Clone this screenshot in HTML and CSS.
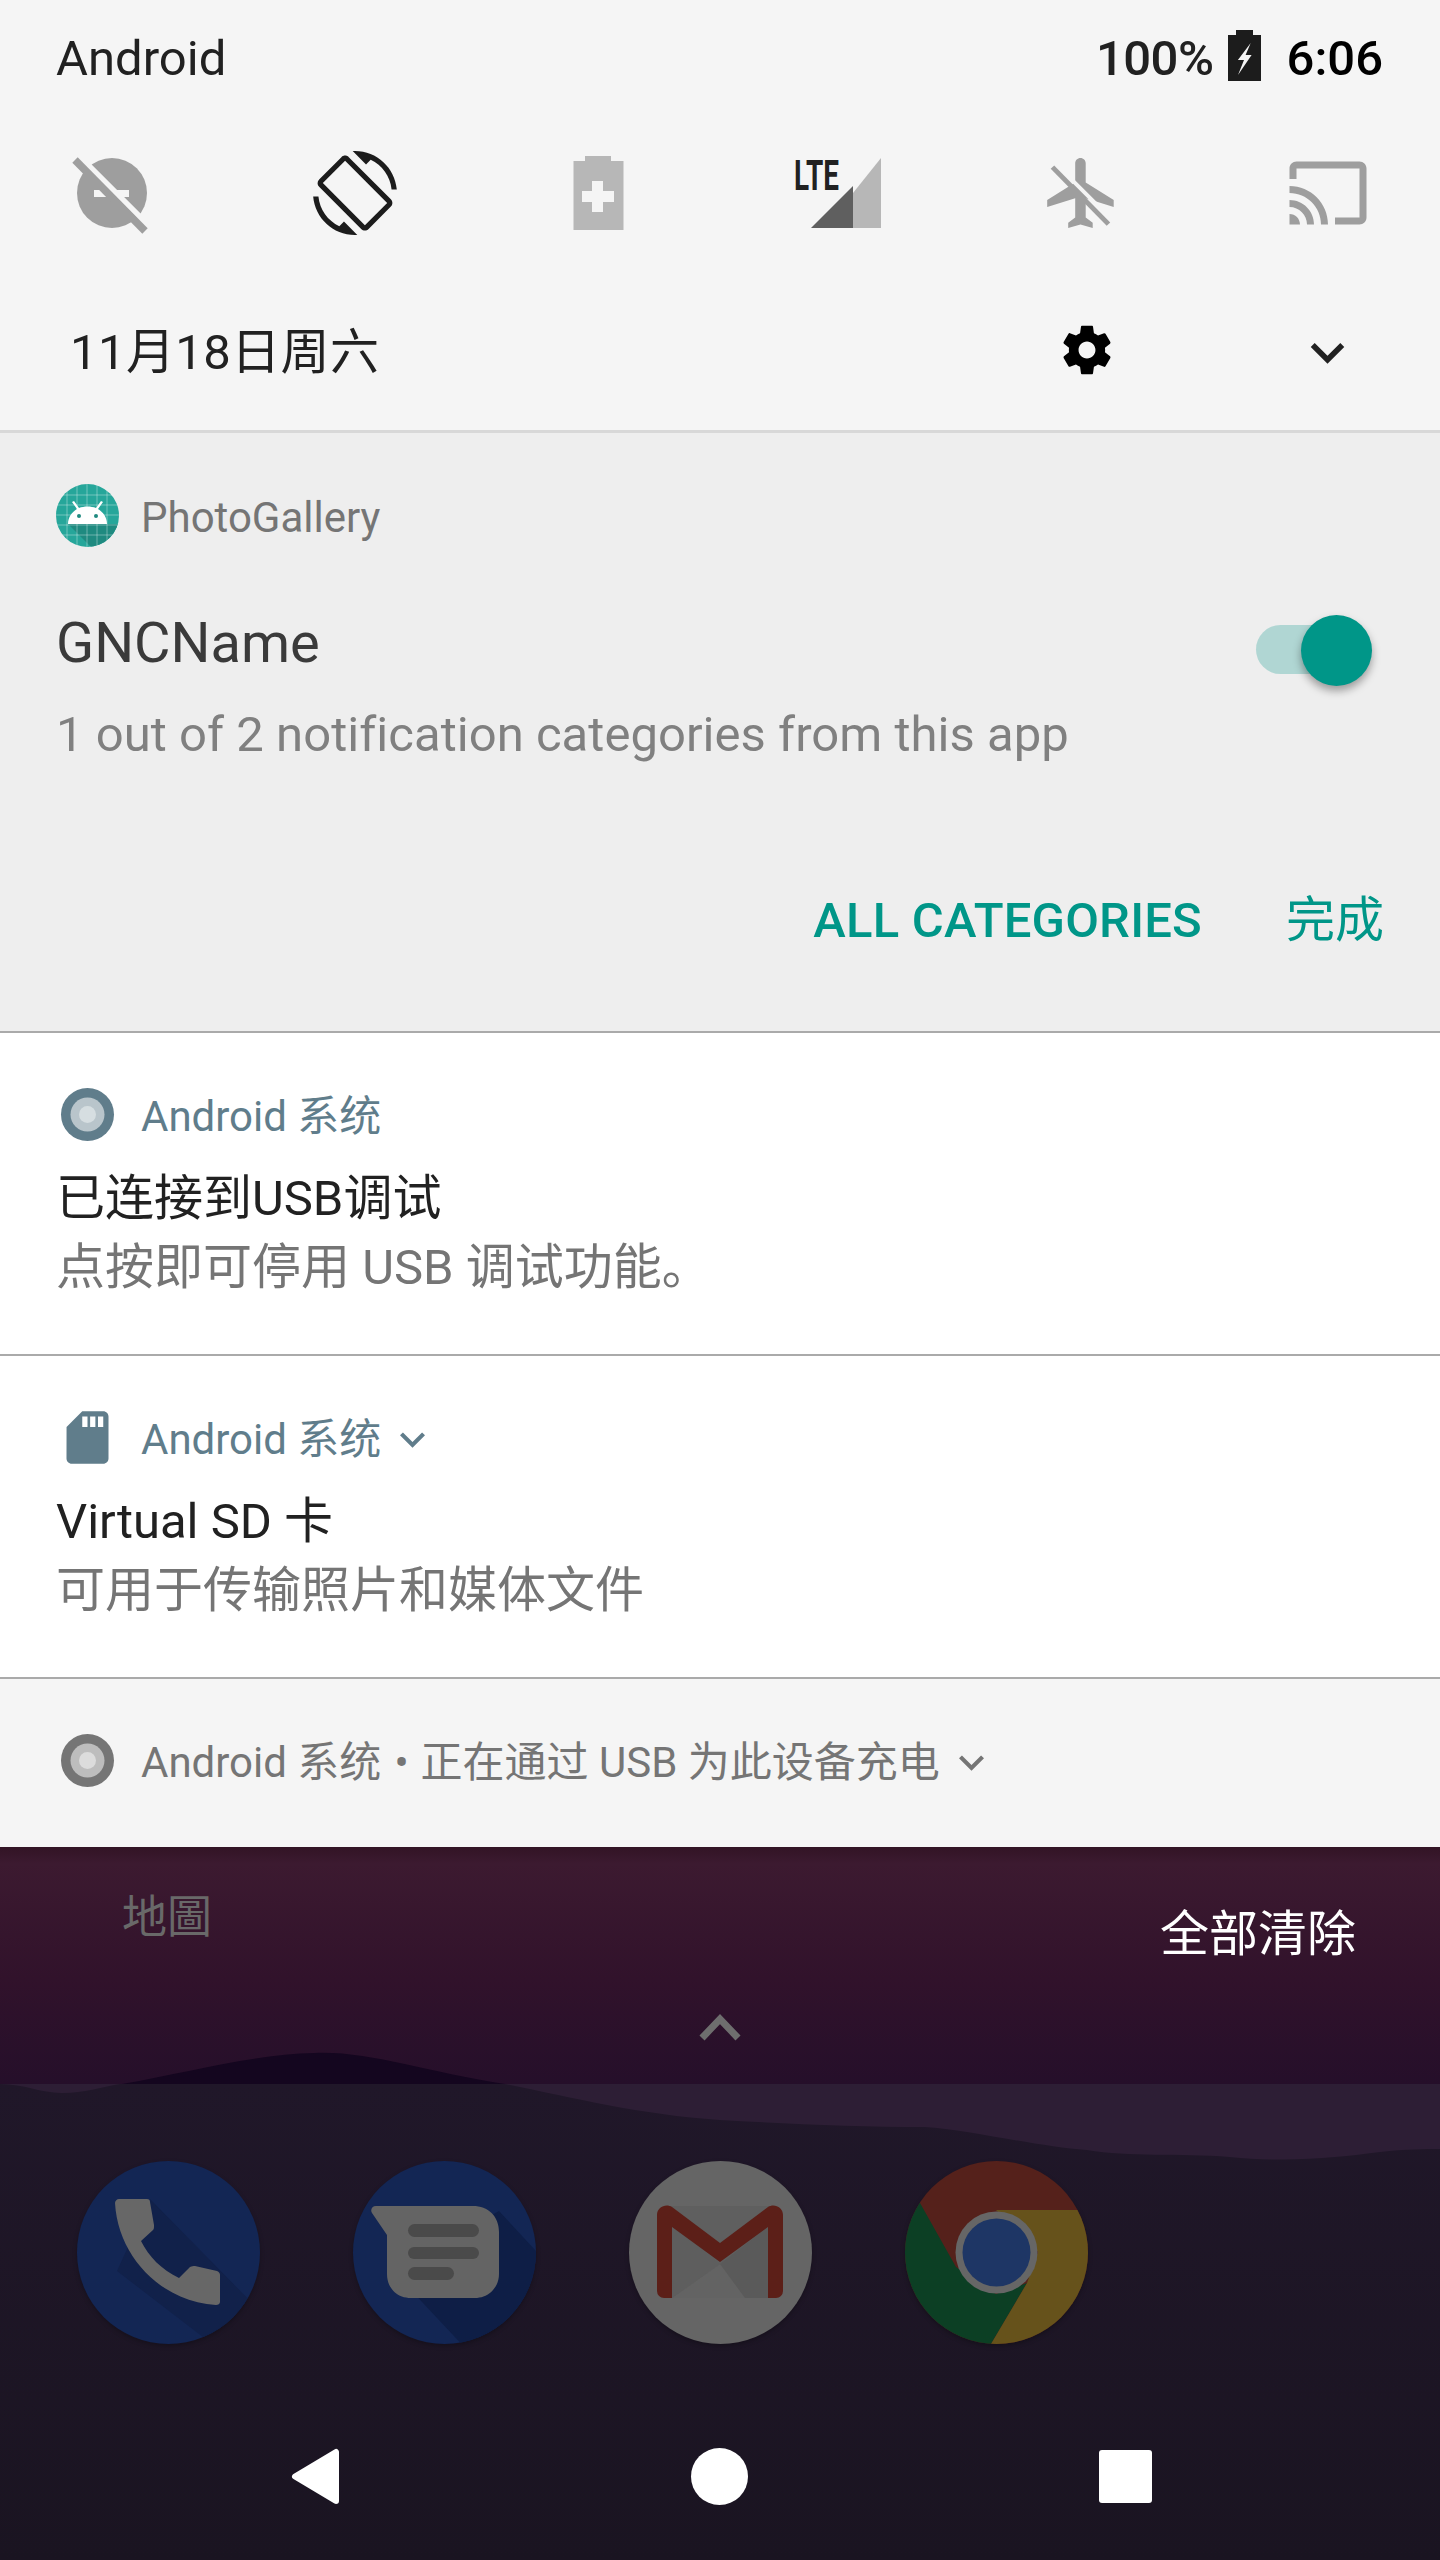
FILE: index.html
```html
<!DOCTYPE html>
<html lang="zh-CN">
<head>
<meta charset="utf-8">
<title>Android notification shade</title>
<link rel="stylesheet" href="styles.css">
</head>
<body>
<div class="screen">
  <header class="quick">
    <div class="status-row">
      <span class="carrier">Android</span>
      <div class="status-right">
        <span class="pct">100%</span>
        <svg class="batt" viewBox="0 0 33 51"><path class="f-dark" d="M8 5V0h17v5h8v46H0V5z"/><path class="f-bg" d="M22.7 13L9.9 30H16l-6 15 13.6-20h-6z"/></svg>
        <span class="clock">6:06</span>
      </div>
    </div>
    <div class="tiles">
      <svg class="tile" viewBox="0 0 84 84"><circle class="f-mid" cx="42" cy="42" r="35"/><rect class="f-bg" x="24" y="39" width="35" height="7"/><path class="s-bg" d="M12 8l66 66" stroke-width="6"/><path class="s-mid" d="M5 9l70 71" stroke-width="7.500"/></svg>
      <svg class="tile" viewBox="0 0 24 24"><path class="f-dark" d="M16.48 2.52c3.27 1.55 5.61 4.72 5.97 8.48h1.5C23.44 4.84 18.29 0 12 0l-.66.03 3.81 3.81 1.33-1.32zm-6.25-.77c-.59-.59-1.54-.59-2.12 0L1.75 8.11c-.59.59-.59 1.54 0 2.12l12.02 12.02c.59.59 1.54.59 2.12 0l6.36-6.36c.59-.59.59-1.54 0-2.12L10.23 1.75zm4.6 19.44L2.81 9.17l6.36-6.36 12.02 12.02-6.36 6.36zm-7.31.29C4.25 19.94 1.91 16.76 1.55 13H.05C.56 19.16 5.71 24 12 24l.66-.03-3.81-3.81-1.33 1.32z"/></svg>
      <svg class="tile" viewBox="0 0 84 84"><path class="f-light" d="M29 5h26v5h12.500v69h-50V10H29z"/><path class="f-bg" d="M36 30h11v10h11v11H47v10H36V51H26V40h10z"/></svg>
      <svg class="tile tile-lte" viewBox="0 0 84 84"><path class="f-light" d="M81 7v70H53V42z"/><path class="f-grey" d="M53 35v42H11z"/><text class="lte" x="-6" y="39" textLength="45" lengthAdjust="spacingAndGlyphs">LTE</text></svg>
      <svg class="tile" viewBox="0.8 0 24 24"><path class="f-mid" d="M21 16v-2l-8-5V3.500c0-.83-.67-1.500-1.500-1.500S10 2.670 10 3.500V9l-8 5v2l8-2.500V19l-2 1.500V22l3.500-1 3.500 1v-1.500L13 19v-5.500l8 2.500z"/><path class="s-bg" d="M5 4.200l16 16" stroke-width="1.100"/><path class="s-mid" d="M3.500 4.600l16 16.300" stroke-width="1.400"/></svg>
      <svg class="tile" viewBox="0 0 24 24"><path class="f-mid" d="M21 3H3c-1.100 0-2 .9-2 2v3h2V5h18v14h-7v2h7c1.100 0 2-.9 2-2V5c0-1.100-.9-2-2-2zM1 18v3h3c0-1.660-1.340-3-3-3zm0-4v2c2.760 0 5 2.240 5 5h2c0-3.870-3.130-7-7-7zm0-4v2c4.970 0 9 4.030 9 9h2c0-6.080-4.930-11-11-11z"/></svg>
    </div>
    <div class="date-row">
      <span class="date">11月18日周六</span>
      <svg class="gear" viewBox="0 0 24 24"><path d="M19.430 12.980c.04-.32.07-.64.07-.98s-.03-.66-.07-.98l2.110-1.650c.19-.15.24-.42.12-.64l-2-3.460c-.12-.22-.39-.3-.61-.22l-2.490 1c-.52-.4-1.080-.73-1.690-.98l-.38-2.650C14.460 2.180 14.250 2 14 2h-4c-.25 0-.46.18-.49.42l-.38 2.650c-.61.25-1.170.59-1.690.98l-2.490-1c-.23-.09-.49 0-.61.22l-2 3.460c-.13.22-.07.49.12.64l2.110 1.650c-.04.32-.07.65-.07.98s.03.66.07.98l-2.110 1.650c-.19.15-.24.42-.12.64l2 3.460c.12.22.39.3.61.22l2.490-1c.52.4 1.080.73 1.690.98l.38 2.650c.03.24.24.42.49.42h4c.25 0 .46-.18.49-.42l.38-2.650c.61-.25 1.170-.59 1.690-.98l2.490 1c.23.09.49 0 .61-.22l2-3.460c.12-.22.07-.49-.12-.64l-2.110-1.650zM12 15.500c-1.930 0-3.500-1.570-3.500-3.500s1.570-3.500 3.500-3.500 3.500 1.570 3.500 3.500-1.570 3.500-3.500 3.500z"/></svg>
      <svg class="expand" viewBox="0 0 24 24"><path d="M16.590 8.590L12 13.170 7.410 8.590 6 10l6 6 6-6z"/></svg>
    </div>
  </header>

  <section class="guts">
    <div class="app-head">
      <svg class="app-icon" viewBox="0 0 63 63">
        <defs><clipPath id="appdisc"><circle cx="31.500" cy="31.500" r="31.500"/></clipPath></defs>
        <g clip-path="url(#appdisc)">
          <rect width="63" height="63" fill="#26a69a"/>
          <path d="M12 40L35 63h12L63 47V40z" fill="#1f8a80"/>
          <path class="grid" d="M0 11h63M0 21h63M0 31h63M0 41h63M0 51h63M11 0v63M21 0v63M31 0v63M41 0v63M51 0v63"/>
        </g>
        <path d="M12 40c0-7 4-12 9-15l-5-7 2-1 5 7c5-2 12-2 17 0l5-7 2 1-5 7c5 3 9 8 9 15z" fill="#fff"/>
        <circle cx="23" cy="32" r="2" fill="#1f8a80"/><circle cx="40" cy="32" r="2" fill="#1f8a80"/>
      </svg>
      <span class="app-name grey">PhotoGallery</span>
    </div>
    <div class="guts-main">
      <div>
        <div class="channel">GNCName</div>
        <div class="channel-sub">1 out of 2 notification categories from this app</div>
      </div>
      <div class="switch"><span class="switch-track"></span><span class="switch-thumb"></span></div>
    </div>
    <div class="guts-actions">
      <span class="act-strong">ALL CATEGORIES</span>
      <span class="act">完成</span>
    </div>
  </section>

  <article class="notif">
    <div class="app-head">
      <svg class="app-icon" viewBox="0 0 63 63"><circle cx="31.500" cy="31.500" r="26.500" fill="#607d8b"/><circle cx="31.500" cy="31.500" r="17" fill="#b9c5cb"/><circle cx="31.500" cy="31.500" r="8.500" fill="#d6dee1"/></svg>
      <span class="app-name blue">Android 系统</span>
    </div>
    <div class="n-title">已连接到USB调试</div>
    <div class="n-body">点按即可停用 USB 调试功能。</div>
  </article>

  <article class="notif">
    <div class="app-head">
      <svg class="app-icon" viewBox="0 0 24 24"><path fill="#607d8b" d="M18 2h-8L4.020 8 4 20c0 1.100.9 2 2 2h12c1.100 0 2-.9 2-2V4c0-1.100-.9-2-2-2zm-6 6h-2V4h2v4zm3 0h-2V4h2v4zm3 0h-2V4h2v4z"/></svg>
      <span class="app-name blue">Android 系统</span>
      <svg class="mini-chev" viewBox="6 8 12 8"><path fill="#607d8b" d="M16.590 8.590L12 13.170 7.410 8.590 6 10l6 6 6-6z"/></svg>
    </div>
    <div class="n-title">Virtual SD 卡</div>
    <div class="n-body">可用于传输照片和媒体文件</div>
  </article>

  <article class="collapsed">
    <svg class="app-icon" viewBox="0 0 63 63"><circle cx="31.500" cy="31.500" r="26.500" fill="#757575"/><circle cx="31.500" cy="31.500" r="17" fill="#bdbdbd"/><circle cx="31.500" cy="31.500" r="8.500" fill="#dcdcdc"/></svg>
    <span class="app-name grey">Android 系统<span class="bullet">•</span>正在通过 USB 为此设备充电</span>
    <svg class="mini-chev" viewBox="6 8 12 8"><path fill="#757575" d="M16.590 8.590L12 13.170 7.410 8.590 6 10l6 6 6-6z"/></svg>
  </article>

  <section class="wall">
    <svg class="hills" viewBox="0 0 1440 713" preserveAspectRatio="none">
      <defs>
        <linearGradient id="sky" x1="0" y1="0" x2="0" y2="1">
          <stop offset="0" stop-color="#321425"/><stop offset=".07" stop-color="#3c1a30"/><stop offset=".55" stop-color="#31122b"/><stop offset="1" stop-color="#250f2a"/>
        </linearGradient>
        <linearGradient id="ground" x1="0" y1="0" x2="0" y2="1">
          <stop offset="0" stop-color="#201729"/><stop offset="1" stop-color="#1a1421"/>
        </linearGradient>
      </defs>
      <rect width="1440" height="238" fill="url(#sky)"/>
      <path d="M122 237C190 225 255 207 315 206C370 204 425 225 505 237z" fill="#14061f"/>
      <rect y="237" width="1440" height="100" fill="#2d1e35"/>
      <path fill="url(#ground)" d="M0 237C25 237 40 246 62 246C85 246 100 240 120 237H505C570 250 640 268 720 273C790 277 860 280 925 280C970 283 1040 300 1087 303C1130 310 1180 306 1230 310C1290 316 1340 310 1380 305C1405 302 1425 302 1440 302V713H0z"/>
    </svg>
    <div class="wall-top">
      <span class="shortcut-label">地圖</span>
      <span class="clear-all">全部清除</span>
    </div>
    <svg class="caret" viewBox="0 0 50 30"><path d="M7 25L25 6l18 19"/></svg>
    <div class="dock">
      <svg class="dock-icon" viewBox="0 0 183 183">
        <defs><clipPath id="disc"><circle cx="91.500" cy="91.500" r="91.500"/></clipPath></defs>
        <circle cx="91.500" cy="91.500" r="91.500" fill="#132654"/>
        <path clip-path="url(#disc)" d="M73 38L183 150V183H135L40 110z" fill="#11214a"/>
        <path fill="#676767" d="M42 38h28c2 0 3 1 3 3l4 23c0 3 0 4-1 5l-12 11c8 16 20 28 38 37l11-11c2-1 3-1 5-1l22 5c2 1 3 2 3 4v27c0 2-2 3-4 3C85 141 41 96 38 42c0-2 2-4 4-4z"/>
      </svg>
      <svg class="dock-icon" viewBox="0 0 183 183">
        <circle cx="91.500" cy="91.500" r="91.500" fill="#132654"/>
        <path clip-path="url(#disc)" d="M40 110L115 190H183V90L146 50z" fill="#0e1e46"/>
        <path fill="#646464" d="M23 45H120c15 0 26 10 26 26v42c0 14-11 24-24 24H58c-14 0-24-10-24-24V74L19 52c-2-3 0-7 4-7z"/>
        <rect x="55" y="63" width="71" height="13" rx="6.500" fill="#4a4a4a"/>
        <rect x="55" y="86" width="71" height="12" rx="6" fill="#4a4a4a"/>
        <rect x="55" y="106" width="46" height="13" rx="6.500" fill="#4a4a4a"/>
      </svg>
      <svg class="dock-icon" viewBox="0 0 183 183">
        <circle cx="91.500" cy="91.500" r="91.500" fill="#656565"/>
        <rect x="35" y="45" width="112" height="92" fill="#5f5f5f"/>
        <path d="M43 137L91 103L139 137z" fill="#636363"/>
        <path d="M43 66L91 103L43 137z" fill="#5e5e5e"/>
        <path d="M139 66L91 103L116 137H139z" fill="#5a5a5a"/>
        <path fill="#5c1f18" d="M35 137a7 7 0 0 1-7-7V54c0-8 9-12 15-8L91 82l48-36c6-4 15 0 15 8v76a7 7 0 0 1-7 7h-8V66L91 101 43 66v71z"/>
      </svg>
      <svg class="dock-icon" viewBox="0 0 183 183">
        <g clip-path="url(#disc)">
          <rect width="183" height="183" fill="#55211b"/>
          <path d="M15 42L51 106L91 133L122 122L86 183H-5V42z" fill="#0c3f24"/>
          <path d="M91 49H183V183H86L122 122L133 91z" fill="#66521b"/>
        </g>
        <circle cx="91.500" cy="91.500" r="41" fill="#666"/>
        <circle cx="91.500" cy="91.500" r="34" fill="#1e3665"/>
      </svg>
    </div>
    <nav class="navbar">
      <svg class="nav-back" viewBox="0 0 49 57"><path d="M4 28.500L45 4v49z"/></svg>
      <span class="nav-home"></span>
      <span class="nav-recent"></span>
    </nav>
  </section>
</div>
</body>
</html>
```
FILE: styles.css
```css
* { box-sizing: border-box; }
html, body { margin: 0; padding: 0; }
body { background: #1a1421; font-family: Roboto, "Noto Sans CJK SC", sans-serif; }
.screen { width: 1440px; height: 2560px; overflow: hidden; display: flex; flex-direction: column; }

.f-dark { fill: #1c1c1c; }
.f-mid { fill: #9e9e9e; }
.f-light { fill: #b7b7b7; }
.f-grey { fill: #5f5f5f; }
.f-bg { fill: #f5f5f5; }
.s-bg { stroke: #f5f5f5; fill: none; }
.s-mid { stroke: #9e9e9e; fill: none; }

.quick { height: 433px; flex: none; background: #f5f5f5; border-bottom: 3px solid #d8d8d8; }
.status-row { height: 114px; display: flex; align-items: center; justify-content: space-between; padding: 3px 57px 0 56px; font-size: 49px; color: #212121; }
.status-right { display: flex; align-items: center; }
.pct { margin-right: 14px; font-weight: 500; letter-spacing: -.5px; }
.batt { width: 33px; height: 51px; margin: 0 26px 6px 0; }
.clock { font-weight: 500; color: #000; }
.tiles { height: 158px; display: flex; align-items: center; justify-content: space-between; padding: 0 70px; }
.tile { width: 84px; height: 84px; flex: none; }
.tile-lte { overflow: visible; }
.lte { font-family: Roboto, sans-serif; font-weight: 700; font-size: 42px; fill: #212121; }
.date-row { height: 158px; display: flex; align-items: center; padding: 0 0 0 70px; }
.date { font-size: 49px; line-height: 60px; padding-top: 3px; letter-spacing: .4px; color: #212121; flex: 1; }
.gear { width: 58px; height: 58px; flex: none; margin: 0 178px 2px 0; }
.expand { width: 67px; height: 67px; flex: none; margin: 2px 79px 0 0; fill: #212121; }

.guts { height: 600px; flex: none; background: #eeeeee; padding: 51px 56px 0 56px; border-bottom: 2px solid #aaaaaa; }
.app-head { display: flex; align-items: center; height: 63px; }
.app-icon { width: 63px; height: 63px; flex: none; }
.grid { stroke: rgba(255,255,255,.35); stroke-width: 1; fill: none; }
.app-name { font-size: 42px; line-height: 63px; padding-top: 4px; margin-left: 22px; white-space: nowrap; }
.bullet { margin: 0 12px 0 13px; }
.grey { color: #757575; }
.blue { color: #607d8b; }
.guts-main { display: flex; justify-content: space-between; margin-top: 61px; }
.channel { font-size: 56px; line-height: 70px; color: #3a3a3a; }
.channel-sub { font-size: 49px; line-height: 70px; margin-top: 22px; color: #808080; letter-spacing: .04px; }
.switch { position: relative; width: 116px; height: 71px; margin: 7px 12px 0 0; flex: none; }
.switch-track { position: absolute; left: 0; top: 10px; width: 112px; height: 49px; border-radius: 25px; background: #b0d6d3; }
.switch-thumb { position: absolute; right: 0; top: 0; width: 71px; height: 71px; border-radius: 50%; background: #009688; box-shadow: 0 5px 9px rgba(0,0,0,.35); }
.guts-actions { display: flex; justify-content: flex-end; gap: 84px; margin-top: 116px; font-size: 49px; line-height: 70px; color: #009688; }
.act-strong { font-weight: 500; letter-spacing: .2px; }

.notif { height: 323px; flex: none; background: #fff; padding: 50px 56px 0; border-bottom: 2px solid #aaaaaa; }
.n-title { margin-top: 18px; font-size: 49px; line-height: 70px; color: #212121; }
.n-body { margin-top: -1px; font-size: 49px; line-height: 70px; color: #757575; }
.mini-chev { width: 25px; height: 17px; flex: none; margin: 4px 0 0 19px; }

.collapsed { height: 168px; flex: none; background: #f5f5f5; display: flex; align-items: center; padding: 0 56px 5px; }

.wall { flex: 1; position: relative; display: flex; flex-direction: column; }
.hills { position: absolute; left: 0; top: 0; width: 1440px; height: 713px; }
.wall-top, .caret, .dock, .navbar { position: relative; }
.wall-top { display: flex; justify-content: space-between; align-items: flex-start; padding: 37px 84px 0 122px; }
.shortcut-label { font-family: "Noto Sans CJK TC", sans-serif; font-size: 45px; line-height: 60px; color: #696969; }
.clear-all { font-size: 49px; line-height: 60px; color: #fff; margin-top: 21px; }
.caret { width: 50px; height: 30px; margin: 48px auto 0; flex: none; fill: none; stroke: #6e6e6e; stroke-width: 7; }
.dock { display: flex; gap: 93px; padding-left: 77px; margin-top: 118px; }
.dock-icon { width: 183px; height: 183px; flex: none; filter: drop-shadow(0 2px 2px rgba(0,0,0,.25)); }
.navbar { display: flex; align-items: center; justify-content: space-between; padding: 104px 288px 0 291px; }
.nav-back { width: 49px; height: 57px; fill: #fff; stroke: #fff; stroke-width: 6; stroke-linejoin: round; }
.nav-home { width: 57px; height: 57px; border-radius: 50%; background: #fff; }
.nav-recent { width: 53px; height: 53px; border-radius: 3px; background: #fff; }
```
